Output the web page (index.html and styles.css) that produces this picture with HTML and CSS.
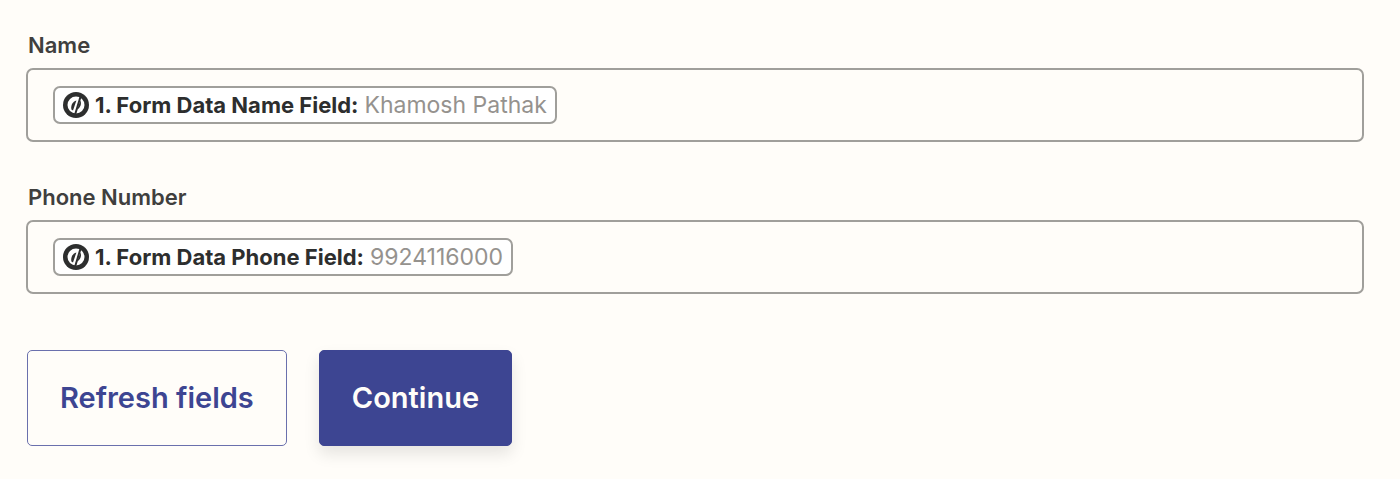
FILE: index.html
```html
<!DOCTYPE html>
<html lang="en">
<head>
  <meta charset="UTF-8" />
  <meta name="viewport" content="width=device-width, initial-scale=1.0" />
  <title>Set up fields</title>
  <link rel="stylesheet" href="styles.css">
</head>
<body>
  <form class="fields-form">
    <div class="field">
      <label for="name">Name</label>
      <div class="field-box">
        <span class="pill">
          <svg class="pill-icon" viewBox="0 0 26 26" aria-hidden="true">
            <circle cx="13" cy="13" r="13" fill="#2d2e2e" />
            <circle cx="13" cy="13" r="8.5" fill="#fff" />
            <path d="M13.4 8.4C9.6 9.4 7.6 13.2 8.4 17.4L10 18.4Z" fill="#2d2e2e" />
            <path d="M17.8 3.8 12.2 22.2" stroke="#2d2e2e" stroke-width="2" />
            <path d="M17.4 8.6C18.8 11.8 17.6 15.6 14.2 17.6Z" fill="#2d2e2e" />
          </svg>
          <span class="pill-name">1. Form Data Name Field:</span>
          <span class="pill-value">Khamosh Pathak</span>
        </span>
        <input type="text" id="name" name="name" />
      </div>
    </div>

    <div class="field">
      <label for="phone">Phone Number</label>
      <div class="field-box">
        <span class="pill">
          <svg class="pill-icon" viewBox="0 0 26 26" aria-hidden="true">
            <circle cx="13" cy="13" r="13" fill="#2d2e2e" />
            <circle cx="13" cy="13" r="8.5" fill="#fff" />
            <path d="M13.4 8.4C9.6 9.4 7.6 13.2 8.4 17.4L10 18.4Z" fill="#2d2e2e" />
            <path d="M17.8 3.8 12.2 22.2" stroke="#2d2e2e" stroke-width="2" />
            <path d="M17.4 8.6C18.8 11.8 17.6 15.6 14.2 17.6Z" fill="#2d2e2e" />
          </svg>
          <span class="pill-name">1. Form Data Phone Field:</span>
          <span class="pill-value">9924116000</span>
        </span>
        <input type="text" id="phone" name="phone" />
      </div>
    </div>

    <div class="actions">
      <button type="button" class="btn btn-outline">Refresh fields</button>
      <button type="submit" class="btn btn-primary">Continue</button>
    </div>
  </form>
</body>
</html>
```
FILE: styles.css
```css
* {
  box-sizing: border-box;
}

body {
  margin: 0;
  padding: 30px 36px 32px 26px;
  background-color: #fffdf9;
  font-family: Inter, "Liberation Sans", sans-serif;
  font-size: 22px;
  line-height: 30px;
}

.field {
  margin-bottom: 40px;
}

label {
  display: block;
  margin-bottom: 8px;
  padding-left: 2px;
  color: #403f3e;
  font-weight: 600;
}

.field-box {
  display: flex;
  align-items: center;
  gap: 4px;
  padding: 16px 25px;
  border: 2px solid #a09f9b;
  border-radius: 7px;
}

.field-box input {
  flex: 1;
  min-width: 0;
  padding: 0;
  border: none;
  outline: none;
  background: transparent;
  color: #2d2e2e;
  font: inherit;
}

.pill {
  display: flex;
  align-items: center;
  gap: 6px;
  padding: 2px 8px;
  border: 2px solid #a09f9b;
  border-radius: 7px;
  background-color: #fff;
  white-space: nowrap;
}

.pill-icon {
  width: 26px;
  height: 26px;
}

.pill-name {
  color: #2d2e2e;
  font-weight: 700;
}

.pill-value {
  color: #95928e;
  font-size: 23px;
}

.actions {
  display: flex;
  gap: 32px;
  margin-top: 56px;
  padding-left: 1px;
}

.btn {
  padding: 32px;
  border: 1px solid #3d4592;
  border-radius: 5px;
  font-family: inherit;
  font-size: 29px;
  font-weight: 600;
  line-height: 30px;
  cursor: pointer;
}

.btn-outline {
  border-color: #6a70ad;
  background-color: transparent;
  color: #3d4592;
}

.btn-primary {
  background-color: #3d4592;
  color: #fffdf9;
  box-shadow: 0 8px 16px rgba(0, 0, 0, 0.1);
}
```
